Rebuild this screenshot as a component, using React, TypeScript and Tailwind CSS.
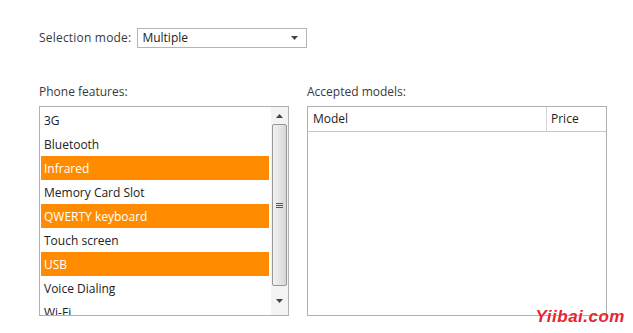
import React from 'react';

const FEATURES = [
  { name: '3G', selected: false },
  { name: 'Bluetooth', selected: false },
  { name: 'Infrared', selected: true },
  { name: 'Memory Card Slot', selected: false },
  { name: 'QWERTY keyboard', selected: true },
  { name: 'Touch screen', selected: false },
  { name: 'USB', selected: true },
  { name: 'Voice Dialing', selected: false },
  { name: 'Wi-Fi', selected: false },
];

function ScrollBar() {
  return (
    <div className="flex w-[17px] flex-col items-center bg-[#f3f3f3]">
      {/* up arrow */}
      <div className="flex h-[17px] w-full items-center justify-center">
        <svg width="7" height="4" viewBox="0 0 7 4">
          <path d="M0 4 L3.5 0 L7 4 Z" fill="#444" />
        </svg>
      </div>
      {/* thumb */}
      <div className="flex h-[162px] w-[15px] items-center justify-center rounded-[2px] border border-[#979797] bg-gradient-to-r from-[#f2f2f2] via-[#e6e6e6] to-[#d6d6d6]">
        <div className="flex flex-col gap-[1px]">
          <div className="h-[1px] w-[7px] bg-[#555]" />
          <div className="h-[1px] w-[7px] bg-[#555]" />
          <div className="h-[1px] w-[7px] bg-[#555]" />
        </div>
      </div>
      <div className="flex flex-1 items-center justify-center">
        <svg width="7" height="4" viewBox="0 0 7 4">
          <path d="M0 0 L7 0 L3.5 4 Z" fill="#444" />
        </svg>
      </div>
    </div>
  );
}

export default function App() {
  return (
    <div className="relative h-[333px] w-[633px] overflow-hidden bg-white pl-[39px] pt-[28px] font-['Segoe_UI','Open_Sans',sans-serif] text-[12px] text-[#3a3a3a]">
      {/* selection mode */}
      <div className="flex h-[20px] items-center">
        <span className="tracking-[0.2px]">Selection mode:</span>
        <div className="ml-[6px] flex h-[20px] w-[170px] items-center justify-between border border-[#b5b5b5] pl-[4px] pr-[8px] text-[#222]">
          <span>Multiple</span>
          <svg width="7" height="4" viewBox="0 0 7 4">
            <path d="M0 0 L7 0 L3.5 4 Z" fill="#444" />
          </svg>
        </div>
      </div>

      <div className="mt-[36px] flex gap-[18px]">
        {/* features list */}
        <div className="flex w-[250px] flex-col">
          <div className="h-[16px] leading-[16px]">Phone features:</div>
          <div className="mt-[6px] flex h-[210px] border border-[#b0b0b0]">
            <div className="flex-1 overflow-hidden pl-[1px] pr-[2px] pt-[1px]">
              {FEATURES.map((f) => (
                <div
                  key={f.name}
                  className={
                    f.selected
                      ? 'h-[24px] bg-[#ff8c00] pl-[3px] leading-[25px] text-white'
                      : 'h-[24px] pl-[3px] leading-[25px] text-[#222]'
                  }
                >
                  {f.name}
                </div>
              ))}
            </div>
            <ScrollBar />
          </div>
        </div>

        {/* accepted models */}
        <div className="flex w-[300px] flex-col">
          <div className="h-[16px] leading-[16px]">Accepted models:</div>
          <div className="mt-[6px] flex h-[210px] flex-col border border-[#b0b0b0]">
            <div className="flex h-[25px] border-b border-[#c8c8c8] text-[#222]">
              <div className="flex-1 border-r border-[#d5d5d5] pl-[5px] leading-[24px]">Model</div>
              <div className="w-[59px] pl-[4px] leading-[24px]">Price</div>
            </div>
          </div>
        </div>
      </div>

      {/* watermark */}
      <div className="absolute right-[8px] bottom-[4px] font-['Liberation_Sans',sans-serif] text-[17px] font-bold italic tracking-[0.5px] text-[#e5252f] [text-shadow:0_0_1px_#fff]">
        Yiibai.com
      </div>
    </div>
  );
}
